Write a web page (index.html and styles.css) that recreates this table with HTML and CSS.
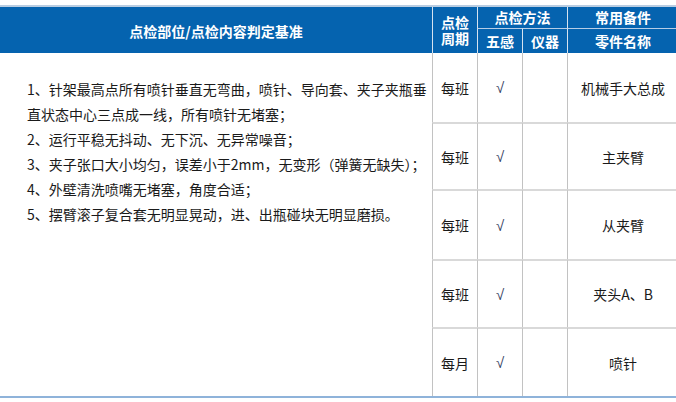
FILE: index.html
```html
<!DOCTYPE html>
<html lang="zh-CN">
<head>
<meta charset="utf-8">
<title>点检表</title>
<link rel="stylesheet" href="styles.css">
</head>
<body>
<div class="page">
  <div class="sheet">
    <div class="h h-main">点检部位/点检内容判定基准</div>
    <div class="h h-period"><span class="ln">点检</span><span class="ln">周期</span></div>
    <div class="h h-method">点检方法</div>
    <div class="h h-parts">常用备件</div>
    <div class="h h-sub h-five">五感</div>
    <div class="h h-sub h-inst">仪器</div>
    <div class="h h-sub h-name">零件名称</div>

    <div class="content">
      <p>1、针架最高点所有喷针垂直无弯曲，喷针、导向套、夹子夹瓶垂直状态中心三点成一线，所有喷针无堵塞；</p>
      <p>2、运行平稳无抖动、无下沉、无异常噪音；</p>
      <p>3、夹子张口大小均匀，误差小于2mm，无变形（弹簧无缺失）；</p>
      <p>4、外壁清洗喷嘴无堵塞，角度合适；</p>
      <p>5、摆臂滚子复合套无明显晃动，进、出瓶碰块无明显磨损。</p>
    </div>

    <div class="c c-first">每班</div><div class="c c-first c-check">√</div><div class="c c-first"></div><div class="c c-first">机械手大总成</div>
    <div class="c">每班</div><div class="c c-check">√</div><div class="c"></div><div class="c">主夹臂</div>
    <div class="c">每班</div><div class="c c-check">√</div><div class="c"></div><div class="c">从夹臂</div>
    <div class="c">每班</div><div class="c c-check">√</div><div class="c"></div><div class="c">夹头A、B</div>
    <div class="c">每月</div><div class="c c-check">√</div><div class="c"></div><div class="c">喷针</div>
  </div>
</div>
</body>
</html>
```

FILE: styles.css
```css
html, body {
  margin: 0;
  padding: 0;
  background: #ffffff;
  overflow: hidden;
}

body {
  font-family: "Noto Sans CJK SC", "Noto Sans", "Liberation Sans", sans-serif;
  color: #1a1a1a;
  font-size: 14px;
}

.page {
  width: 676px;
  height: 402px;
  overflow: hidden;
  padding-top: 5px;
  box-sizing: border-box;
}

.sheet {
  width: 678px;
  display: grid;
  grid-template-columns: 432px 45px 45px 45px 111px;
  grid-template-rows: 21px 25px 69px 67px 70px 68px 69px;
  border-top: 2px solid #b9cde2;
  border-bottom: 2px solid #8fb3da;
}

.h {
  background: #0563af;
  color: #ffffff;
  font-weight: bold;
  display: flex;
  align-items: center;
  justify-content: center;
  text-align: center;
  box-sizing: border-box;
}

.h-main {
  grid-column: 1;
  grid-row: 1 / 3;
  padding-top: 1px;
}

.h-period {
  grid-column: 2;
  grid-row: 1 / 3;
  border-left: 1px solid #d6e3f0;
  flex-direction: column;
}

.h-period .ln {
  display: block;
  height: 16px;
  line-height: 16px;
}

.h-method {
  grid-column: 3 / 5;
  grid-row: 1;
  border-left: 1px solid #d6e3f0;
  padding-bottom: 2px;
}

.h-parts {
  grid-column: 5;
  grid-row: 1;
  border-left: 1px solid #d6e3f0;
  padding-bottom: 2px;
}

.h-sub {
  grid-row: 2;
  border-top: 1px solid #b7cde6;
  border-left: 1px solid #d6e3f0;
}

.h-five { grid-column: 3; }
.h-inst { grid-column: 4; }
.h-name { grid-column: 5; }

.content {
  grid-column: 1;
  grid-row: 3 / 8;
  padding: 24px 0 0 27px;
  line-height: 25px;
  font-size: 14px;
  color: #1a1a1a;
}

.content p {
  margin: 0;
  width: 408px;
}

.c {
  display: flex;
  align-items: center;
  justify-content: center;
  box-sizing: border-box;
  border-left: 1px solid #c2c2c2;
  border-top: 2px solid #d9d9d9;
  font-size: 14px;
  color: #1a1a1a;
}

.c-first {
  border-top: none;
}

.c-check {
  color: #3a4566;
  font-family: "Liberation Sans", "DejaVu Sans", sans-serif;
  font-size: 15px;
}
```
